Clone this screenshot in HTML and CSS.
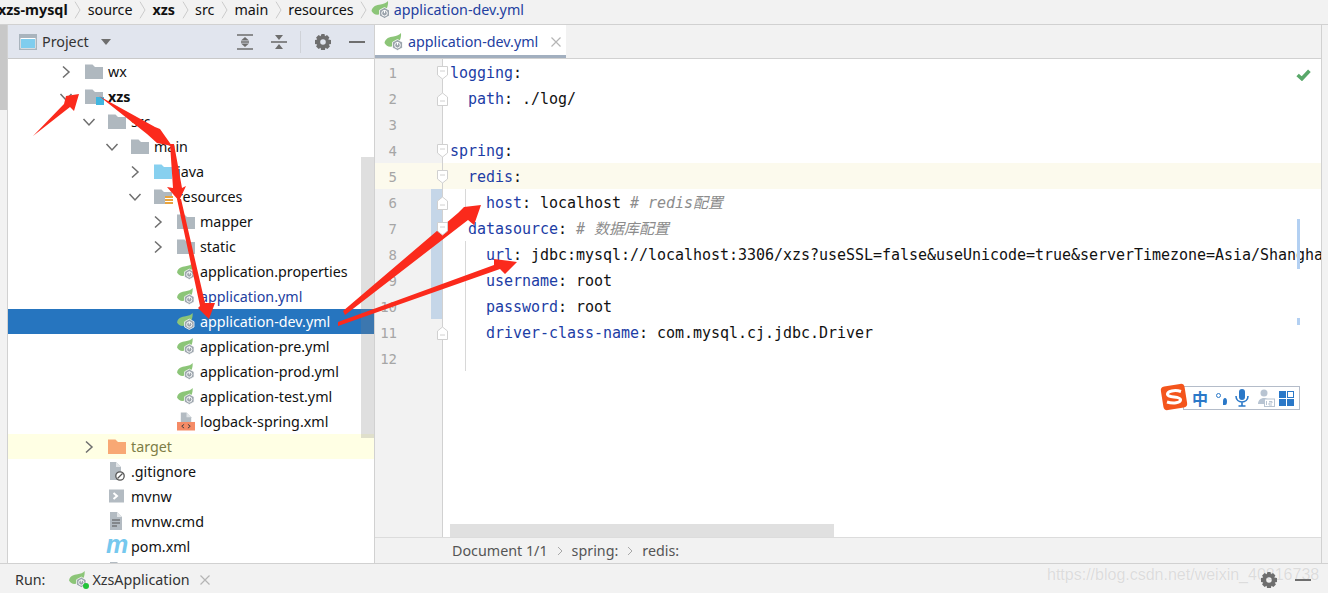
FILE: index.html
```html
<!DOCTYPE html>
<html lang="en">
  <head>
    <meta charset="UTF-8" />
    <meta name="viewport" content="width=device-width, initial-scale=1.0" />
    <title>application-dev.yml</title>
    <link rel="stylesheet" href="styles.css">
  </head>
  <body>
    <svg class="sprite" xmlns="http://www.w3.org/2000/svg">
      <symbol id="chev-right" viewBox="0 0 16 16"><path d="M5 2.5 L11 8 L5 13.5" fill="none" stroke="#6e6e6e" stroke-width="1.5"/></symbol>
      <symbol id="chev-down" viewBox="0 0 16 16"><path d="M2.5 5 L8 11 L13.5 5" fill="none" stroke="#6e6e6e" stroke-width="1.5"/></symbol>
      <symbol id="sep" viewBox="0 0 9 24"><path d="M1.5 2 L7.5 12 L1.5 22" fill="none" stroke="#c4c4c4" stroke-width="1"/></symbol>
      <symbol id="folder" viewBox="0 0 18 16"><path d="M0 1 H7.5 L10 3.5 H18 V15.5 H0 Z" fill="currentColor"/></symbol>
      <symbol id="spring" viewBox="0 0 19 18">
        <path d="M0 10 C1 5 5 4 9 3.5 C12 3 15 2 16.5 0 C17 5 15 11 9 13 C5 14.5 2 13.5 0 10 Z" fill="#8cc578"/>
        <path d="M13 6.5 L18 9.2 V14.8 L13 17.5 L8 14.8 V9.2 Z" fill="#9aa3ab" stroke="#fff" stroke-width=".8"/>
        <circle cx="13" cy="12.2" r="2.8" fill="none" stroke="#fff" stroke-width="1"/>
        <path d="M13 9 V12.2" stroke="#fff" stroke-width="1"/>
      </symbol>
      <symbol id="fold-open" viewBox="0 0 11 14"><path d="M.5 .5 H10.5 V9 L5.5 13 L.5 9 Z M3 5 H8" fill="#fff" stroke="#d0d0d0"/></symbol>
      <symbol id="fold-end" viewBox="0 0 11 14"><path d="M.5 13.5 H10.5 V5 L5.5 1 L.5 5 Z M3 9 H8" fill="#fff" stroke="#d0d0d0"/></symbol>
    </svg>

    <header class="crumbs">
      <b class="crumb-first">xzs-mysql</b>
      <svg class="sep"><use href="#sep"/></svg>
      <span>source</span>
      <svg class="sep"><use href="#sep"/></svg>
      <b>xzs</b>
      <svg class="sep"><use href="#sep"/></svg>
      <span>src</span>
      <svg class="sep"><use href="#sep"/></svg>
      <span>main</span>
      <svg class="sep"><use href="#sep"/></svg>
      <span>resources</span>
      <svg class="sep"><use href="#sep"/></svg>
      <span class="crumb-file"><svg class="ico-spring"><use href="#spring"/></svg><span class="modified">application-dev.yml</span></span>
    </header>

    <main class="main">
      <div class="strip-left"></div>

      <aside class="sidebar">
        <div class="side-head">
          <svg class="win-icon" viewBox="0 0 18 16"><rect x=".75" y=".75" width="16.5" height="14.5" fill="#fff" stroke="#a9b4bd" stroke-width="1.5"/><rect x="2" y="5" width="14" height="9" fill="#7fcdee"/><rect x="1" y="1" width="16" height="3" fill="#a9b4bd"/></svg>
          <span class="side-title">Project</span>
          <svg class="caret" viewBox="0 0 10 6"><path d="M0 0 H10 L5 6 Z" fill="#6e6e6e"/></svg>
          <div class="side-tools">
            <svg class="tool" viewBox="0 0 16 16"><path d="M0 1 H16 M0 15 H16 M4 8 H12" stroke="#6e6e6e" stroke-width="1.6"/><path d="M8 3 L12 6.5 H4 Z M8 13 L4 9.5 H12 Z" fill="#6e6e6e"/></svg>
            <svg class="tool tool-collapse" viewBox="0 0 16 16"><path d="M0 8 H16" stroke="#6e6e6e" stroke-width="1.6"/><path d="M8 6 L4 1 H12 Z M8 10 L12 15 H4 Z" fill="#6e6e6e"/></svg>
            <span class="tool-div"></span>
            <svg class="tool" viewBox="0 0 16 16"><path d="M6.5 0 H9.5 L10 2.2 L12 1.1 L14.4 3.4 L13.2 5.4 L16 6 V10 L13.8 10.4 L14.9 12.4 L12.4 14.9 L10.4 13.8 L10 16 H6 L5.6 13.8 L3.6 14.9 L1.1 12.4 L2.2 10.4 L0 10 V6 L2.2 5.6 L1.1 3.6 L3.6 1.1 L5.6 2.2 Z M8 5.2 A2.8 2.8 0 1 0 8 10.8 A2.8 2.8 0 1 0 8 5.2 Z" fill="#6e6e6e" fill-rule="evenodd"/></svg>
            <svg class="tool tool-min" viewBox="0 0 16 16"><path d="M0 8 H16" stroke="#6e6e6e" stroke-width="2"/></svg>
          </div>
        </div>

        <div class="tree">
          <div class="row d0"><svg class="chev"><use href="#chev-right"/></svg><svg class="ico grey"><use href="#folder"/></svg><span>wx</span></div>
          <div class="row d0">
            <svg class="chev"><use href="#chev-down"/></svg>
            <span class="ico-wrap"><svg class="ico grey"><use href="#folder"/></svg><i class="module-dot"></i></span>
            <b>xzs</b>
          </div>
          <div class="row d1"><svg class="chev"><use href="#chev-down"/></svg><svg class="ico grey"><use href="#folder"/></svg><span>src</span></div>
          <div class="row d2"><svg class="chev"><use href="#chev-down"/></svg><svg class="ico grey"><use href="#folder"/></svg><span>main</span></div>
          <div class="row d3"><svg class="chev"><use href="#chev-right"/></svg><svg class="ico blue"><use href="#folder"/></svg><span>java</span></div>
          <div class="row d3">
            <svg class="chev"><use href="#chev-down"/></svg>
            <span class="ico-wrap"><svg class="ico grey"><use href="#folder"/></svg><i class="res-lines"></i></span>
            <span>resources</span>
          </div>
          <div class="row d4"><svg class="chev"><use href="#chev-right"/></svg><svg class="ico grey"><use href="#folder"/></svg><span>mapper</span></div>
          <div class="row d4"><svg class="chev"><use href="#chev-right"/></svg><svg class="ico grey"><use href="#folder"/></svg><span>static</span></div>
          <div class="row d4"><i class="chev"></i><svg class="ico"><use href="#spring"/></svg><span>application.properties</span></div>
          <div class="row d4"><i class="chev"></i><svg class="ico"><use href="#spring"/></svg><span class="modified">application.yml</span></div>
          <div class="row d4 selected"><i class="chev"></i><svg class="ico"><use href="#spring"/></svg><span>application-dev.yml</span></div>
          <div class="row d4"><i class="chev"></i><svg class="ico"><use href="#spring"/></svg><span>application-pre.yml</span></div>
          <div class="row d4"><i class="chev"></i><svg class="ico"><use href="#spring"/></svg><span>application-prod.yml</span></div>
          <div class="row d4"><i class="chev"></i><svg class="ico"><use href="#spring"/></svg><span>application-test.yml</span></div>
          <div class="row d4">
            <i class="chev"></i>
            <svg class="ico ico-tall" viewBox="0 0 19 19"><path d="M4 0 H10 L15 5 V10 H4 Z" fill="#b3bbc2"/><path d="M10 0 V5 H15" fill="#dfe3e6"/><rect y="10" width="19" height="9" fill="#f58b66"/><path d="M7.5 12.5 L5 14.5 L7.5 16.5 M11.5 12.5 L14 14.5 L11.5 16.5" fill="none" stroke="#3c3c3c" stroke-width="1"/></svg>
            <span>logback-spring.xml</span>
          </div>
          <div class="row d1 excluded"><svg class="chev"><use href="#chev-right"/></svg><svg class="ico orange"><use href="#folder"/></svg><span>target</span></div>
          <div class="row d1">
            <i class="chev"></i>
            <svg class="ico ico-tall" viewBox="0 0 18 19"><path d="M2 0 H8 L13 5 V18 H2 Z" fill="#b3bbc2"/><path d="M8 0 V5 H13" fill="#e2e5e8"/><circle cx="12" cy="14" r="4.2" fill="#fff" stroke="#555" stroke-width="1.3"/><path d="M9.5 16.5 L14.5 11.5" stroke="#555" stroke-width="1.3"/></svg>
            <span>.gitignore</span>
          </div>
          <div class="row d1">
            <i class="chev"></i>
            <svg class="ico" viewBox="0 0 18 16"><rect x="1" y="1" width="15" height="13" fill="#b3bbc2"/><path d="M5.5 4.5 L9 7.5 L5.5 10.5" fill="none" stroke="#fff" stroke-width="2"/></svg>
            <span>mvnw</span>
          </div>
          <div class="row d1">
            <i class="chev"></i>
            <svg class="ico ico-tall" viewBox="0 0 18 19"><path d="M2 0 H9 L14 5 V18 H2 Z" fill="#b3bbc2"/><path d="M9 0 V5 H14" fill="#e2e5e8"/><path d="M4 8 H12 M4 11 H12 M4 14 H9" stroke="#555" stroke-width="1.2"/></svg>
            <span>mvnw.cmd</span>
          </div>
          <div class="row d1"><i class="chev"></i><em class="maven-m">m</em><span>pom.xml</span></div>
          <div class="row d1">
            <i class="chev"></i>
            <svg class="ico ico-tall" viewBox="0 0 18 19"><path d="M2 0 H9 L14 5 V18 H2 Z" fill="#b3bbc2"/></svg>
          </div>
          <div class="tree-scroll"></div>
        </div>
      </aside>

      <section class="editor-pane">
        <div class="tabs">
          <div class="tab">
            <svg class="ico-spring"><use href="#spring"/></svg>
            <span class="modified">application-dev.yml</span>
            <svg class="tab-x" viewBox="0 0 10 10"><path d="M.5 .5 L9.5 9.5 M9.5 .5 L.5 9.5" stroke="#b5b5b5" stroke-width="1.2"/></svg>
          </div>
        </div>

        <div class="editor">
          <div class="gutter">
            <div class="gl">1<svg class="fold"><use href="#fold-open"/></svg></div>
            <div class="gl">2<svg class="fold"><use href="#fold-end"/></svg></div>
            <div class="gl">3</div>
            <div class="gl">4<svg class="fold"><use href="#fold-open"/></svg></div>
            <div class="gl current">5<svg class="fold"><use href="#fold-open"/></svg></div>
            <div class="gl changed">6<svg class="fold"><use href="#fold-end"/></svg></div>
            <div class="gl changed">7<svg class="fold"><use href="#fold-open"/></svg></div>
            <div class="gl changed">8</div>
            <div class="gl changed">9</div>
            <div class="gl changed">10</div>
            <div class="gl">11<svg class="fold"><use href="#fold-end"/></svg></div>
            <div class="gl">12</div>
          </div>
          <div class="code">
            <div class="cl"><span class="k">logging</span>:</div>
            <div class="cl">  <span class="k">path</span>: ./log/</div>
            <div class="cl"></div>
            <div class="cl"><span class="k">spring</span>:</div>
            <div class="cl current">  <span class="k">redis</span>:</div>
            <div class="cl guide">    <span class="k">host</span>: localhost <span class="c"># redis配置</span></div>
            <div class="cl">  <span class="k">datasource</span>: <span class="c"># 数据库配置</span></div>
            <div class="cl guide">    <span class="k">url</span>: jdbc:mysql://localhost:3306/xzs?useSSL=false&amp;useUnicode=true&amp;serverTimezone=Asia/Shanghai&amp;allowMultiQueries=true</div>
            <div class="cl guide">    <span class="k">username</span>: root</div>
            <div class="cl guide">    <span class="k">password</span>: root</div>
            <div class="cl guide">    <span class="k">driver-class-name</span>: com.mysql.cj.jdbc.Driver</div>
            <div class="cl guide"></div>
          </div>

          <svg class="check" viewBox="0 0 14 11"><path d="M1.5 5.5 L5.5 9 L12.5 1.5" fill="none" stroke="#59a869" stroke-width="3.4"/></svg>
          <i class="mark mark-a"></i>
          <i class="mark mark-b"></i>
          <div class="hscroll"></div>
        </div>

        <div class="path-bar">
          <span>Document 1/1</span>
          <svg class="path-sep" viewBox="0 0 6 10"><path d="M1 1 L5 5 L1 9" fill="none" stroke="#a8a8a8"/></svg>
          <span>spring:</span>
          <svg class="path-sep" viewBox="0 0 6 10"><path d="M1 1 L5 5 L1 9" fill="none" stroke="#a8a8a8"/></svg>
          <span>redis:</span>
        </div>
      </section>

      <div class="strip-right"></div>
    </main>

    <footer class="run-bar">
      <span class="run-label">Run:</span>
      <span class="run-ico"><svg class="ico"><use href="#spring"/></svg><i class="run-dot"></i></span>
      <span class="run-name">XzsApplication</span>
      <svg class="run-x" viewBox="0 0 10 10"><path d="M.5 .5 L9.5 9.5 M9.5 .5 L.5 9.5" stroke="#b5b5b5" stroke-width="1.2"/></svg>
      <div class="run-tools">
        <svg class="tool" viewBox="0 0 16 16"><path d="M6.5 0 H9.5 L10 2.2 L12 1.1 L14.4 3.4 L13.2 5.4 L16 6 V10 L13.8 10.4 L14.9 12.4 L12.4 14.9 L10.4 13.8 L10 16 H6 L5.6 13.8 L3.6 14.9 L1.1 12.4 L2.2 10.4 L0 10 V6 L2.2 5.6 L1.1 3.6 L3.6 1.1 L5.6 2.2 Z M8 5.2 A2.8 2.8 0 1 0 8 10.8 A2.8 2.8 0 1 0 8 5.2 Z" fill="#6e6e6e" fill-rule="evenodd"/></svg>
        <svg class="tool" viewBox="0 0 16 16"><path d="M0 8 H16" stroke="#6e6e6e" stroke-width="2"/></svg>
      </div>
    </footer>

    <span class="watermark">https://blog.csdn.net/weixin_40816738</span>

    <!-- floating input method bar -->
    <div class="ime">
      <svg class="ime-logo" viewBox="0 0 28 28">
        <rect x="2" y="2" width="24" height="24" rx="4" fill="#f4551c" transform="rotate(-9 14 14)"/>
        <path d="M21 8.5 C15 6.5 7 8 7.5 11.5 C8 15 20 13 20.5 16.5 C21 20 13 21 7 19" fill="none" stroke="#fff" stroke-width="3"/>
      </svg>
      <span class="ime-zh">中</span>
      <span class="ime-dot"></span>
      <span class="ime-comma"></span>
      <svg class="ime-mic" viewBox="0 0 14 18"><rect x="4" y="0" width="6" height="11" rx="3" fill="#2a78c8"/><path d="M1 7 C1 15 13 15 13 7 M7 13 V17 M3.5 17 H10.5" fill="none" stroke="#2a78c8" stroke-width="1.6"/></svg>
      <svg class="ime-user" viewBox="0 0 17 18"><circle cx="6" cy="4" r="3.5" fill="#b8c4d2"/><path d="M0 15 C0 7 12 7 12 15 Z" fill="#b8c4d2"/><rect x="6.5" y="10" width="10" height="7.5" fill="#fff" stroke="#b8c4d2"/><path d="M8.5 12 V16 M11 12.5 H14 V14 H11 V16 H14" fill="none" stroke="#b8c4d2"/></svg>
      <span class="ime-grid"><i></i><i class="hollow"></i><i></i><i></i></span>
    </div>

    <!-- red annotation arrows -->
    <svg class="arrows" viewBox="0 0 1328 593" xmlns="http://www.w3.org/2000/svg">
      <g fill="#fb2a1c">
        <polygon points="33,136 64,104 66,96 79,94 74,111 70,107"/>
        <polygon points="99,96 155,127 160,129 172,146 157,143 147,134"/>
        <polygon points="170,144 174,144 182,188 186,186 179,201 167,187 173,188"/>
        <polygon points="177,199 181,199 205,303 215,303 209,319 198,308 200,306"/>
        <polygon points="343,311 458,213 464,207 481,205 474,225 468,220 345,315"/>
        <polygon points="338,322 494,265 494,259 517,262 505,274 500,269 338,326"/>
      </g>
    </svg>
  </body>
</html>
```

FILE: styles.css
```css
* {
  box-sizing: border-box;
}

html,
body {
  margin: 0;
  padding: 0;
  height: 593px;
  overflow: hidden;
}

body {
  position: relative;
  display: flex;
  flex-direction: column;
  background: #f2f2f2;
  color: #111;
  font-family: "Noto Sans", "Noto Sans CJK SC", sans-serif;
  font-size: 14.3px;
}

.sprite {
  position: absolute;
  width: 0;
  height: 0;
}

.modified {
  color: #23409f;
}

/* top breadcrumb */
.crumbs {
  height: 25px;
  flex: none;
  display: flex;
  align-items: center;
  gap: 5.5px;
  padding-bottom: 5px;
  border-bottom: 1px solid #d1d1d1;
  overflow: hidden;
  white-space: nowrap;
}

.crumb-first {
  margin-left: -2px;
}

.sep {
  width: 9px;
  height: 20px;
  flex: none;
}

.crumb-file {
  display: flex;
  align-items: center;
  gap: 3px;
  margin-left: -3px;
}

.ico-spring {
  width: 20px;
  height: 18px;
  flex: none;
}

/* main area */
.main {
  flex: 1;
  min-height: 0;
  display: flex;
  border-bottom: 1px solid #d1d1d1;
}

.strip-left {
  width: 8px;
  flex: none;
  border-right: 1px solid #d1d1d1;
  background: linear-gradient(#c8c8c8 85px, #f2f2f2 85px);
}

.strip-right {
  width: 7px;
  flex: none;
  border-left: 1px solid #d1d1d1;
}

.sidebar {
  width: 367px;
  flex: none;
  display: flex;
  flex-direction: column;
  background: #fff;
  border-right: 1px solid #d1d1d1;
}

.side-head {
  height: 34px;
  flex: none;
  display: flex;
  align-items: center;
  padding-left: 11px;
  background: #e1e5ee;
  border-bottom: 1px solid #c9c9c9;
}

.win-icon {
  width: 18px;
  height: 16px;
}

.side-title {
  margin-left: 5px;
  color: #333;
}

.caret {
  width: 10px;
  height: 6px;
  margin-left: 12px;
}

.side-tools {
  margin-left: auto;
  display: flex;
  align-items: center;
  padding-right: 9px;
}

.tool {
  width: 16px;
  height: 16px;
  flex: none;
}

.tool-collapse {
  margin-left: 18px;
}

.tool-div {
  width: 1px;
  height: 22px;
  margin: 0 14px 0 13px;
  background: #cfd2d8;
}

.tool-min {
  margin-left: 18px;
}

.tree {
  position: relative;
  flex: 1;
  overflow: hidden;
}

.row {
  height: 25px;
  display: flex;
  align-items: center;
  white-space: nowrap;
}

.d0 { padding-left: 50px; }
.d1 { padding-left: 73px; }
.d2 { padding-left: 96px; }
.d3 { padding-left: 119px; }
.d4 { padding-left: 142px; }

.chev {
  width: 16px;
  height: 16px;
  margin-right: 11px;
  flex: none;
}

.ico {
  width: 18px;
  height: 17px;
  margin-right: 5px;
  flex: none;
}

.ico-tall {
  height: 19px;
}

.grey { color: #afb8bf; }
.blue { color: #87d0ef; }
.orange { color: #f8a874; }

.ico-wrap {
  position: relative;
  display: flex;
}

.module-dot {
  position: absolute;
  left: 11px;
  top: 9px;
  width: 8px;
  height: 8px;
  background: #40b6e0;
}

.res-lines {
  position: absolute;
  left: 11px;
  top: 8px;
  width: 8px;
  height: 9px;
  background: repeating-linear-gradient(#e8a33d 0 2px, #fff 2px 3px);
}

.maven-m {
  width: 21px;
  margin: -5px 4px 0 -2px;
  color: #75c8ee;
  font: italic bold 25px/25px "Liberation Sans", sans-serif;
}

.selected {
  background: #2675bf;
  color: #fff;
}

.excluded {
  background: #ffffe4;
  color: #7d7d47;
}

.tree-scroll {
  position: absolute;
  right: 0;
  top: 98px;
  width: 13px;
  height: 281px;
  background: rgba(128, 128, 128, 0.25);
}

/* editor */
.editor-pane {
  flex: 1;
  min-width: 0;
  display: flex;
  flex-direction: column;
  background: #fff;
}

.tabs {
  height: 34px;
  flex: none;
  display: flex;
  background: #f2f2f2;
  border-bottom: 1px solid #d1d1d1;
}

.tab {
  width: 191px;
  display: flex;
  align-items: center;
  gap: 4px;
  padding: 3px 0 0 9px;
  background: #fff;
  border-bottom: 3px solid #a2afbf;
}

.tab-x {
  width: 10px;
  height: 10px;
  margin-left: 9px;
}

.editor {
  position: relative;
  flex: 1;
  display: flex;
  overflow: hidden;
}

.gutter {
  width: 68px;
  flex: none;
  background: #f2f2f2;
  border-right: 1px solid #d1d1d1;
}

.gl {
  position: relative;
  height: 26px;
  padding-right: 45px;
  text-align: right;
  color: #a6a6a6;
  font: 14px/28px "DejaVu Sans Mono", monospace;
}

.gl.current {
  background: #fcfaed;
}

.gl.changed {
  background: linear-gradient(90deg, transparent 56px, #c5d6e8 56px);
}

.fold {
  position: absolute;
  right: -6px;
  top: 7px;
  width: 11px;
  height: 14px;
  z-index: 1;
}

.code {
  flex: 1;
  min-width: 0;
  font: 15px/28px "DejaVu Sans Mono", "Noto Sans CJK SC", monospace;
  letter-spacing: -0.03px;
  color: #111;
}

.cl {
  position: relative;
  height: 26px;
  padding-left: 7px;
  white-space: pre;
}

.cl.current {
  background: #fcfaed;
}

.cl.guide::before {
  content: "";
  position: absolute;
  left: 22px;
  top: 0;
  bottom: 0;
  width: 1px;
  background: #d8d8d8;
}

.k {
  color: #1c3da5;
}

.c {
  color: #8c8c8c;
  font-style: italic;
}

.check {
  position: absolute;
  right: 10px;
  top: 10px;
  width: 15px;
  height: 12px;
}

.mark {
  position: absolute;
  right: 21px;
  width: 3px;
  background: #b3d0f2;
}

.mark-a {
  top: 160px;
  height: 50px;
}

.mark-b {
  top: 259px;
  height: 7px;
}

.hscroll {
  position: absolute;
  left: 75px;
  bottom: 0;
  width: 384px;
  height: 13px;
  background: #e0e0e0;
}

.path-bar {
  height: 26px;
  flex: none;
  display: flex;
  align-items: center;
  gap: 9px;
  padding-left: 77px;
  color: #555;
  background: #f2f2f2;
  border-top: 1px solid #dcdcdc;
}

.path-sep {
  width: 6px;
  height: 10px;
}

/* run bar */
.run-bar {
  height: 29px;
  flex: none;
  display: flex;
  align-items: center;
  padding: 2px 0 0 15px;
  color: #333;
}

.run-ico {
  position: relative;
  display: flex;
  margin-left: 24px;
}

.run-dot {
  position: absolute;
  right: 3px;
  bottom: -1px;
  width: 6px;
  height: 6px;
  border-radius: 50%;
  background: #22c43a;
}

.run-x {
  width: 10px;
  height: 10px;
  margin-left: 10px;
}

.run-tools {
  position: relative;
  z-index: 1;
  margin-left: auto;
  display: flex;
  gap: 18px;
  padding-right: 17px;
}

/* overlays */
.ime {
  position: absolute;
  left: 1183px;
  top: 386px;
  width: 117px;
  height: 24px;
  display: flex;
  align-items: center;
  background: #fff;
  border: 1px solid #b4bcc9;
}

.ime-logo {
  position: absolute;
  left: -24px;
  top: -4px;
  width: 28px;
  height: 28px;
}

.ime-zh {
  margin-left: 8px;
  color: #2a78c8;
  font: bold 16px/20px "Noto Sans CJK SC", sans-serif;
}

.ime-dot {
  width: 5px;
  height: 5px;
  margin: 0 0 6px 8px;
  border: 1.5px solid #2a78c8;
  border-radius: 50%;
}

.ime-comma {
  width: 4px;
  height: 7px;
  margin: 6px 0 0 2px;
  background: #2a78c8;
  border-radius: 50% 50% 50% 0;
}

.ime-mic {
  width: 14px;
  height: 18px;
  margin-left: 8px;
}

.ime-user {
  width: 17px;
  height: 18px;
  margin-left: 9px;
}

.ime-grid {
  display: grid;
  grid-template-columns: 7px 7px;
  gap: 1px;
  margin-left: 4px;
}

.ime-grid i {
  width: 7px;
  height: 7px;
  background: #2a78c8;
}

.ime-grid i.hollow {
  background: #fff;
  border: 1px solid #2a78c8;
}

.watermark {
  position: absolute;
  left: 1047px;
  top: 565px;
  color: #dcdcdc;
  font: 16px/20px "Liberation Sans", sans-serif;
  text-shadow: 0 0 1px #fff;
  white-space: nowrap;
}

.arrows {
  position: absolute;
  left: 0;
  top: 0;
  width: 1328px;
  height: 593px;
  pointer-events: none;
}
```
